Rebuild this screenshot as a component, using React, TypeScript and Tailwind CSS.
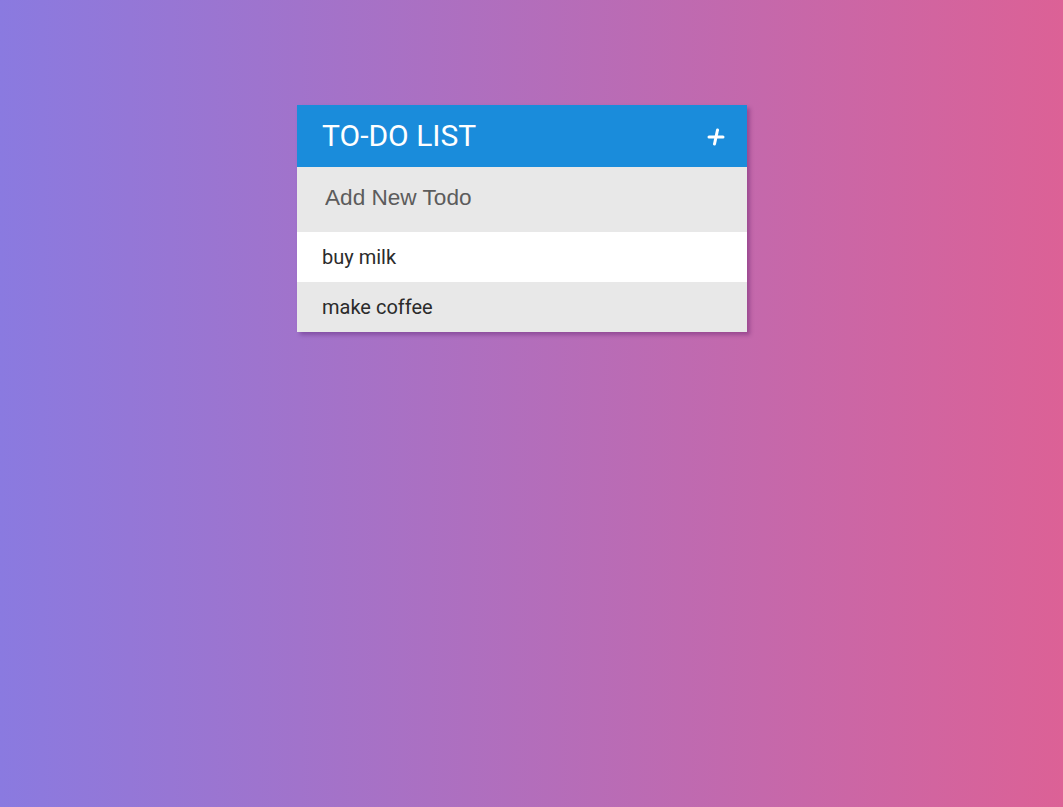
import React from 'react';

const todos = ['buy milk', 'make coffee'];

const App: React.FC = () => {
  return (
    <div className="min-h-[807px] w-full bg-[linear-gradient(to_right,#8a7ae0,#dc6196)] pt-[105px] font-['Roboto',sans-serif]">
      <div className="ml-[297px] w-[450px] shadow-[3px_3px_4px_rgba(60,0,80,0.3)]">
        <header className="flex h-[62px] items-center justify-between bg-[#1a8cdb] pl-[25px] pr-[22px] text-white">
          <h1 className="text-[30px] leading-none font-normal">TO-DO LIST</h1>
          <svg width="18" height="18" viewBox="0 0 18 18" className="mt-[2px]">
            <path d="M10.5 2 L7.5 16" stroke="white" strokeWidth="3" strokeLinecap="round" />
            <path d="M2 9 L16 9" stroke="white" strokeWidth="3" strokeLinecap="round" />
          </svg>
        </header>
        <input
          className="block h-[65px] w-full bg-[#e8e8e8] pb-[4px] pl-[28px] font-['Liberation_Sans',Arial,sans-serif] text-[22.6px] text-[#555] outline-none placeholder:text-[#5c5c5c]"
          placeholder="Add New Todo"
        />
        <ul>
          {todos.map((t, i) => (
            <li
              key={t}
              className={`flex h-[50px] items-center pl-[25px] text-[20px] text-[#2b2b2b] ${i % 2 === 0 ? 'bg-white' : 'bg-[#e8e8e8]'}`}
            >
              {t}
            </li>
          ))}
        </ul>
      </div>
    </div>
  );
};

export default App;
